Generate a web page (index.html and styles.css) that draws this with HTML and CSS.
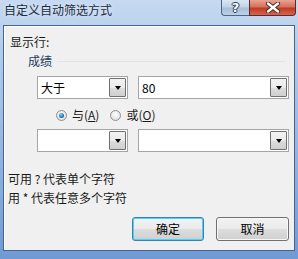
FILE: index.html
```html
<!DOCTYPE html>
<html>
<head>
<meta charset="utf-8">
<link rel="stylesheet" href="styles.css">
</head>
<body>
<div class="window">
  <div class="titlebar">
    <div class="title">自定义自动筛选方式</div>
    <div class="controls">
      <div class="btn-help">?</div>
      <div class="btn-close">
        <svg width="16" height="11" viewBox="0 0 16 11">
          <path d="M3 1.5 L13 9.5 M13 1.5 L3 9.5" stroke="#3a2a2a" stroke-width="4.2" stroke-linecap="round"/>
          <path d="M3 1.5 L13 9.5 M13 1.5 L3 9.5" stroke="#ffffff" stroke-width="2.4" stroke-linecap="round"/>
        </svg>
      </div>
    </div>
  </div>
  <div class="client">
    <div class="show-label">显示行:</div>
    <div class="group-head"><span class="group-title">成绩</span><span class="group-line"></span></div>
    <div class="combo-row first">
      <div class="combo small"><span class="combo-text">大于</span><span class="drop"><span class="tri"></span></span></div>
      <div class="combo large"><span class="combo-text">80</span><span class="drop"><span class="tri"></span></span></div>
    </div>
    <div class="radio-row">
      <span class="radio checked"></span><span class="radio-label">与(<u>A</u>)</span>
      <span class="radio second"></span><span class="radio-label">或(<u>O</u>)</span>
    </div>
    <div class="combo-row second">
      <div class="combo small"><span class="combo-text"></span><span class="drop"><span class="tri"></span></span></div>
      <div class="combo large"><span class="combo-text"></span><span class="drop"><span class="tri"></span></span></div>
    </div>
    <div class="hints">
      <div>可用 ? 代表单个字符</div>
      <div>用 * 代表任意多个字符</div>
    </div>
    <div class="buttons">
      <div class="button default">确定</div>
      <div class="button">取消</div>
    </div>
  </div>
</div>
</body>
</html>
```
FILE: styles.css
```css
* { box-sizing: border-box; }
html, body { margin: 0; padding: 0; }
body {
  width: 298px; height: 259px; overflow: hidden;
  font-family: "Noto Sans CJK SC", "Microsoft YaHei", sans-serif;
  font-size: 12px; color: #1a1a1a;
}
.window {
  width: 298px; height: 259px;
  background: linear-gradient(180deg, #c6d9f0 0%, #b3cbeb 20%, #92b4e0 60%, #6f9ad4 100%);
  display: flex; flex-direction: column;
  padding: 0 3px 8px 3px;
}
.titlebar {
  height: 25px; flex: none;
  display: flex; align-items: flex-start; justify-content: space-between;
  margin-right: -3px;
}
.title {
  padding: 2px 0 0 1px; line-height: 16px; font-size: 12px; color: #1b2b3e;
  text-shadow: 0 0 4px #eef4fb;
}
.controls { display: flex; margin-right: 2px; }
.btn-help {
  width: 28px; height: 16px;
  border: 1px solid #4c6584; border-top: none; border-right: none;
  border-radius: 0 0 0 4px;
  background: linear-gradient(180deg, #dbe6f3 0%, #c3d3e6 45%, #a8bdd7 55%, #bcd0e8 100%);
  color: #fff; font-family: "DejaVu Sans", sans-serif; font-weight: bold; font-size: 13px;
  line-height: 15px; text-align: center;
  text-shadow: 0 0 1px #2a3d55, 1px 0 0 #2a3d55, -1px 0 0 #2a3d55, 0 1px 0 #2a3d55, 0 -1px 0 #2a3d55;
}
.btn-close {
  width: 47px; height: 16px;
  border: 1px solid #5a2b2b; border-top: none;
  border-radius: 0 0 4px 0;
  background: linear-gradient(180deg, #e8a493 0%, #d8705b 45%, #c13a24 55%, #d5664f 100%);
  display: flex; align-items: center; justify-content: center;
}
.client {
  flex: 1;
  background: #f0f0f0;
  border: 1px solid #45638c;
  box-shadow: inset 1px 1px 0 #ffffff;
  display: flex; flex-direction: column;
}
.show-label { margin: 8px 0 0 6px; line-height: 16px; }
.group-head {
  margin: 3px 9px 0 24px; height: 16px;
  display: flex; align-items: center;
}
.group-title { line-height: 16px; color: #1e3a5c; }
.group-line { flex: 1; height: 1px; background: #dde3e8; margin-left: 5px; margin-top: 1px; }
.combo-row { display: flex; gap: 10px; padding-left: 33px; }
.combo-row.first { margin-top: 7px; }
.combo-row.second { margin-top: 6px; }
.combo {
  height: 23px; background: #fff; border: 1px solid #a5a5a5;
  display: flex; align-items: stretch;
}
.combo.small { width: 91px; }
.combo.large { width: 151px; }
.combo-text { flex: 1; padding-left: 3px; line-height: 21px; color: #000; }
.drop {
  width: 17px; margin: 1px 1px 1px 0;
  border: 1px solid #707070; border-radius: 1px;
  background: linear-gradient(180deg, #f2f2f2 0%, #ebebeb 50%, #dddddd 51%, #cfcfcf 100%);
  display: flex; align-items: center; justify-content: center;
}
.tri {
  width: 0; height: 0;
  border-left: 3.5px solid transparent; border-right: 3.5px solid transparent;
  border-top: 4px solid #000;
  margin-top: 1px;
}
.radio-row {
  margin-top: 8px; height: 16px; padding-left: 52px;
  display: flex; align-items: center;
}
.radio {
  width: 11px; height: 11px; border-radius: 50%;
  border: 1px solid #8e8f8f;
  background: radial-gradient(circle at 50% 40%, #ffffff 0%, #e6e6e6 60%, #cfcfcf 100%);
  display: flex; align-items: center; justify-content: center;
}
.radio.checked::after {
  content: ""; width: 5px; height: 5px; border-radius: 50%;
  background: radial-gradient(circle at 40% 35%, #8ed1f7 0%, #1d6fb8 60%, #0e3f75 100%);
}
.radio.second { margin-left: 11px; }
.radio-label { margin-left: 5px; line-height: 16px; }
.radio-label u { text-decoration: underline; text-underline-offset: 1px; }
.hints { margin: 17px 0 0 4px; line-height: 19px; }
.buttons {
  margin-top: 10px; padding-right: 5px;
  display: flex; justify-content: flex-end; gap: 12px;
}
.button {
  width: 73px; height: 24px;
  border: 1px solid #707070; border-radius: 3px;
  background: linear-gradient(180deg, #f2f2f2 0%, #ebebeb 50%, #dddddd 51%, #cfcfcf 100%);
  text-align: center; line-height: 22px; color: #000;
  box-shadow: inset 0 0 0 1px #f8f8f8;
}
.button.default {
  width: 72px;
  border-color: #3c7fb1;
  box-shadow: inset 0 0 0 1px #48d4fb;
}
```
